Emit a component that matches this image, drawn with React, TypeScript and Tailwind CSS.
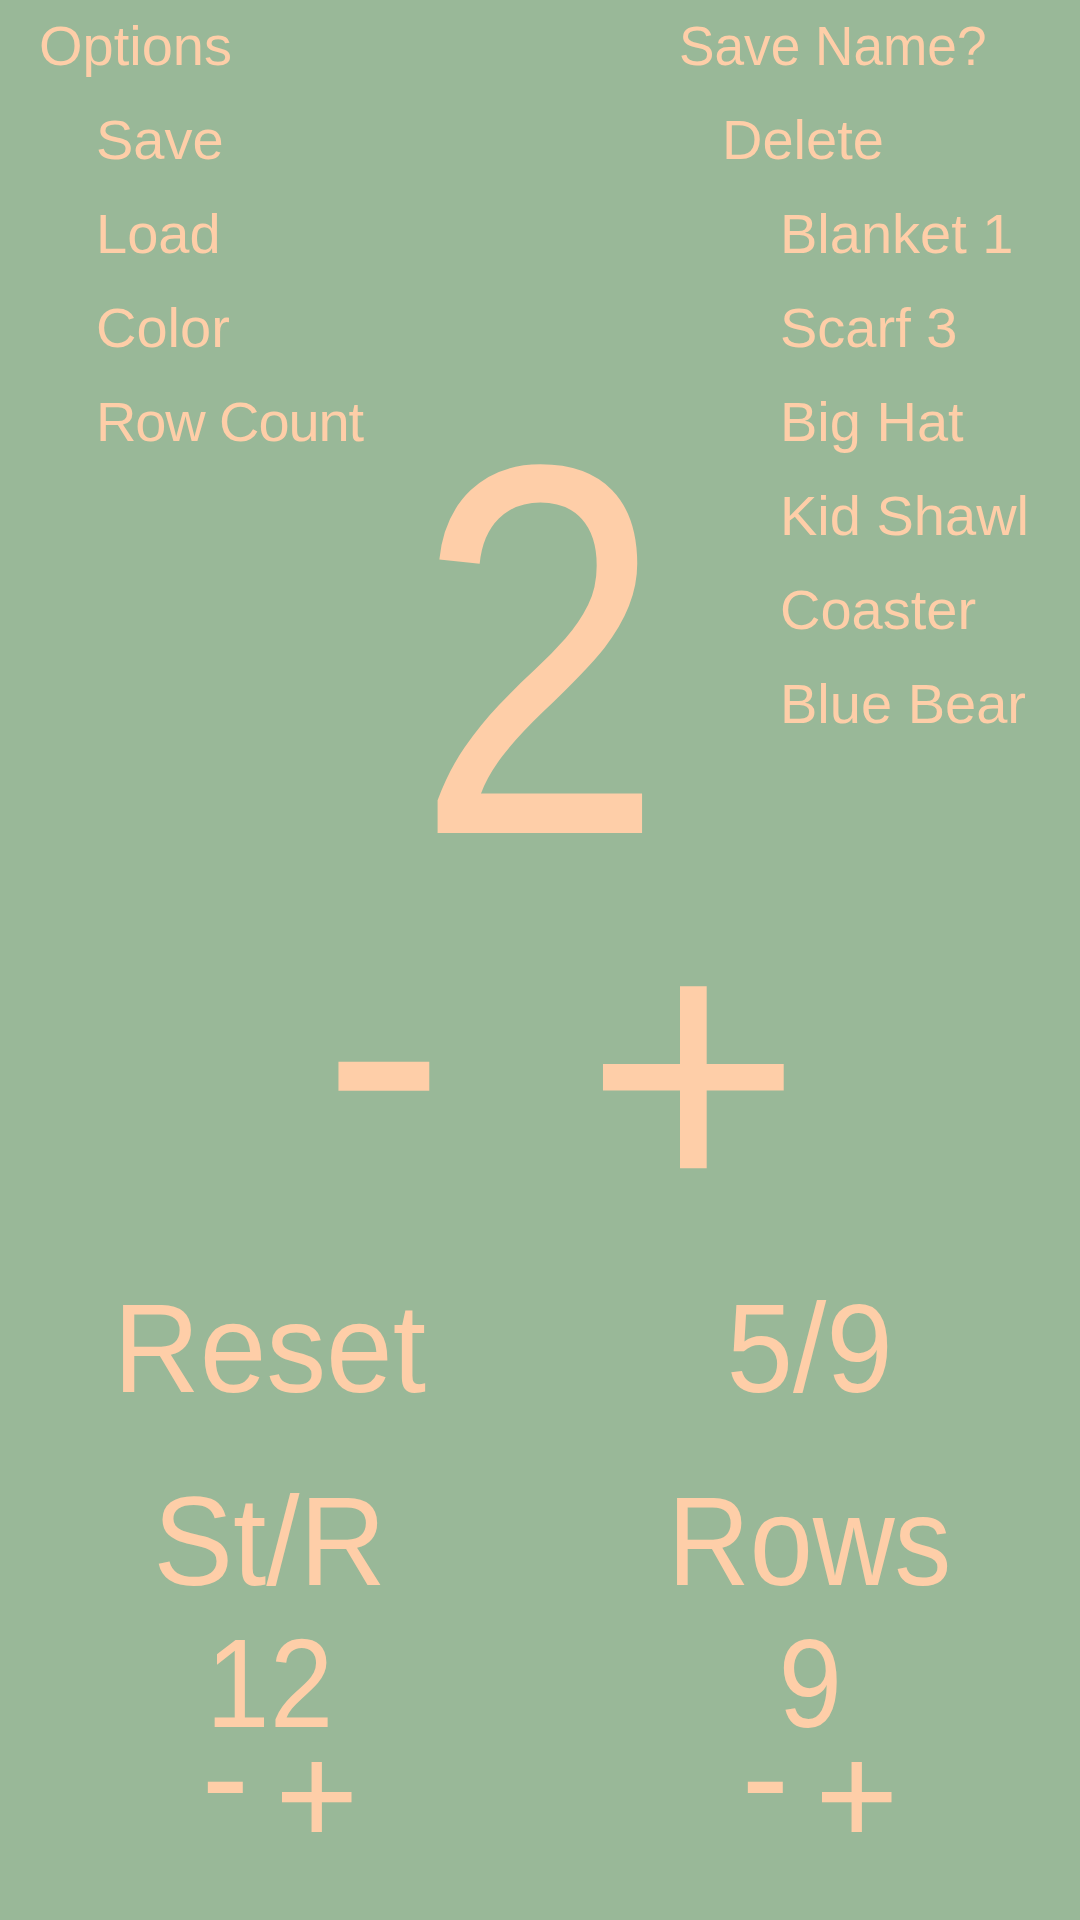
export default function App() {
  const names = ["Blanket 1", "Scarf 3", "Big Hat", "Kid Shawl", "Coaster", "Blue Bear"];
  return (
    <div className="relative min-h-screen w-full overflow-hidden bg-[#99B898] text-[#FECEA8] font-['Liberation_Sans',Arial,sans-serif]">
      {/* Options menu */}
      <div className="flex flex-col text-[56px] leading-[94px] -mt-[1px]">
        <div className="pl-[39px]">Options</div>
        <div className="pl-[96px]">Save</div>
        <div className="pl-[96px]">Load</div>
        <div className="pl-[96px]">Color</div>
        <div className="pl-[96px] tracking-[-0.02em]">Row Count</div>
      </div>

      {/* Big count */}
      <div className="text-center text-[528px] leading-[362px]">
        <span className="inline-block scale-x-85">2</span>
      </div>

      {/* Big minus / plus */}
      <div className="mt-[29px] flex items-start justify-center gap-[139px] pl-[44px] text-[372px] leading-none">
        <span>-</span>
        <span className="pt-[26px]">+</span>
      </div>

      {/* Reset / progress */}
      <div className="mt-[28px] grid grid-cols-2 text-[126px] leading-[126px]">
        <div className="text-center">
          <span className="inline-block scale-x-95">Reset</span>
        </div>
        <div className="text-center">
          <span className="inline-block scale-x-95">5/9</span>
        </div>
      </div>

      {/* Counters */}
      <div className="mt-[67px] grid grid-cols-2">
        <div className="flex flex-col items-center">
          <div className="text-[126px] leading-[126px] scale-x-95">St/R</div>
          <div className="mt-[28px] text-[127px] leading-[100px] scale-x-90">12</div>
          <div className="mt-[6px] flex items-start gap-[26px] pl-[20px] text-[143px] leading-[74px]">
            <span>-</span>
            <span className="pt-[20px]">+</span>
          </div>
        </div>
        <div className="flex flex-col items-center">
          <div className="text-[126px] leading-[126px] scale-x-90">Rows</div>
          <div className="mt-[28px] text-[127px] leading-[100px] scale-x-90">9</div>
          <div className="mt-[6px] flex items-start gap-[26px] pl-[20px] text-[143px] leading-[74px]">
            <span>-</span>
            <span className="pt-[20px]">+</span>
          </div>
        </div>
      </div>

      {/* Save / load menu */}
      <div className="absolute left-[679px] top-0 -mt-[1px] flex flex-col text-[56px] leading-[94px]">
        <div className="origin-left scale-x-95">Save Name?</div>
        <div className="ml-[43px]">Delete</div>
        {names.map((n) => (
          <div key={n} className="ml-[101px]">
            {n}
          </div>
        ))}
      </div>
    </div>
  );
}
